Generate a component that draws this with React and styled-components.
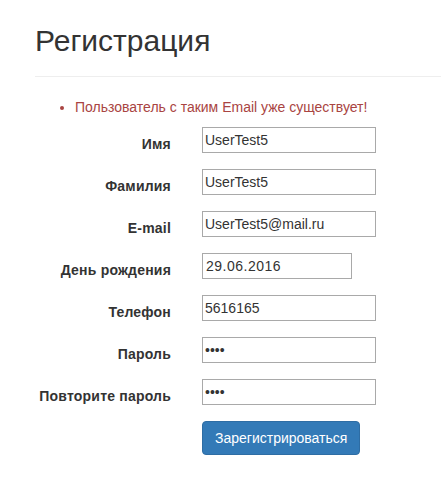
import React from 'react';
import styled, { createGlobalStyle } from 'styled-components';

const GlobalStyle = createGlobalStyle`
  body {
    margin: 0;
    background: #fff;
    font-family: "Liberation Sans", Arial, sans-serif;
    font-size: 14px;
    line-height: 20px;
    color: #333;
  }
`;

const fields = [
  { label: 'Имя', value: 'UserTest5' },
  { label: 'Фамилия', value: 'UserTest5' },
  { label: 'E-mail', value: 'UserTest5@mail.ru' },
  { label: 'День рождения', value: '29.06.2016', date: true },
  { label: 'Телефон', value: '5616165' },
  { label: 'Пароль', value: '1234', type: 'password' },
  { label: 'Повторите пароль', value: '1234', type: 'password' },
];

export default function App() {
  return (
    <Page>
      <GlobalStyle />
      <Header>
        <Title>Регистрация</Title>
      </Header>
      <Errors>
        <li>Пользователь с таким Email уже существует!</li>
      </Errors>
      <Form onSubmit={(e) => e.preventDefault()}>
        {fields.map((f) => (
          <React.Fragment key={f.label}>
            <Label>{f.label}</Label>
            <Input
              type={f.type || 'text'}
              defaultValue={f.value}
              $date={f.date}
            />
          </React.Fragment>
        ))}
        <span />
        <div>
          <SubmitButton type="submit">Зарегистрироваться</SubmitButton>
        </div>
      </Form>
    </Page>
  );
}

const Page = styled.div`
  padding-left: 35px;
  padding-bottom: 20px;
`;

const Header = styled.div`
  padding: 24px 0 19px;
  border-bottom: 1px solid #eee;
`;

const Title = styled.h2`
  margin: 0;
  font-size: 30px;
  line-height: 33px;
  font-weight: 400;
  color: #333;
`;

const Errors = styled.ul`
  margin: 20px 0 10px;
  padding-left: 40px;
  color: #a94442;
`;

const Form = styled.form`
  display: grid;
  grid-template-columns: 136px 174px;
  column-gap: 31px;
  row-gap: 15px;
  grid-auto-rows: minmax(27px, auto);
`;

const Label = styled.label`
  padding-top: 7px;
  text-align: right;
  font-weight: bold;
  letter-spacing: 0.2px;
  color: #333;
`;

const Input = styled.input`
  box-sizing: border-box;
  width: ${(p) => (p.$date ? '150px' : '174px')};
  height: 26px;
  margin: 0;
  padding: ${(p) => (p.$date ? '1px 3px' : '1px 2px')};
  border: 1px solid #a9a9a9;
  border-radius: 0;
  font-family: "Liberation Sans", Arial, sans-serif;
  font-size: 14px;
  letter-spacing: ${(p) => (p.$date ? '0.5px' : '0')};
  color: #333;
  background: #fff;
  outline: none;
`;

const SubmitButton = styled.button`
  padding: 6px 12px;
  font-family: "Liberation Sans", Arial, sans-serif;
  font-size: 14px;
  line-height: 20px;
  color: #fff;
  background-color: #337ab7;
  border: 1px solid #2e6da4;
  border-radius: 4px;
  cursor: pointer;
`;
